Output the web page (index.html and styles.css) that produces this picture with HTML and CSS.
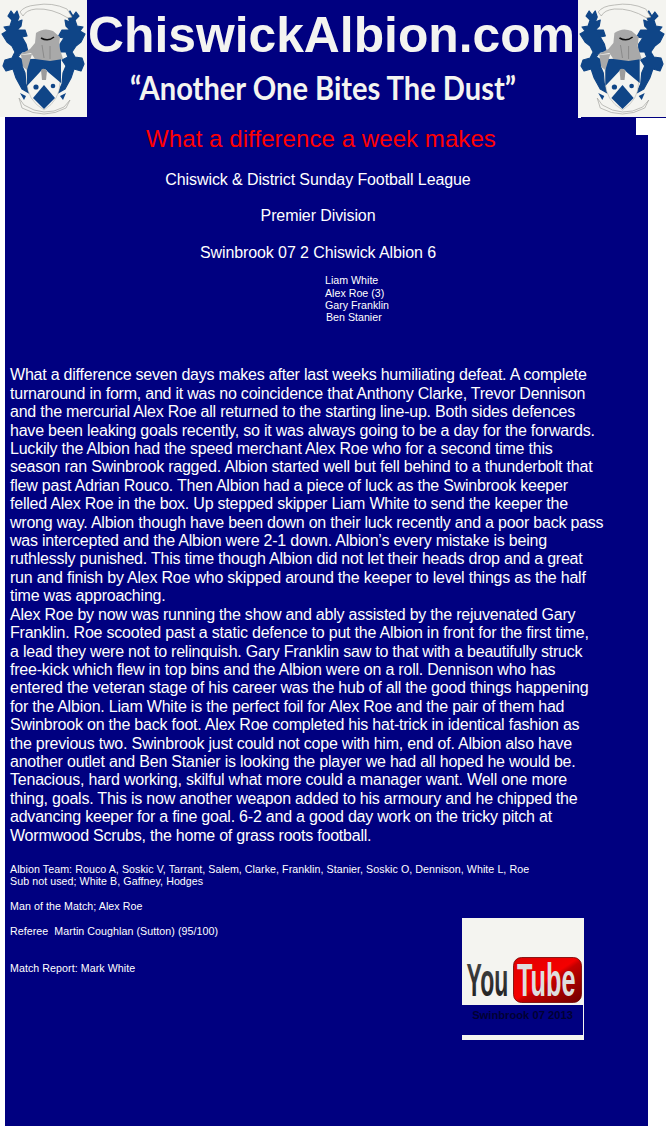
FILE: index.html
```html
<!DOCTYPE html>
<html lang="en">
<head>
<meta charset="utf-8">
<title>ChiswickAlbion.com</title>
<link rel="stylesheet" href="styles.css">
</head>
<body>
<header class="masthead">
  <svg class="crest" viewBox="0 0 87 117" preserveAspectRatio="none" aria-hidden="true">
    <symbol id="crest-art" viewBox="0 0 87 117" preserveAspectRatio="none">
      <rect width="87" height="117" fill="#f4f4f0"/>
      <g fill="#0f4587" stroke="#0f4587" stroke-width="1.2" stroke-linejoin="round">
        <path d="M11,11 L14,15 L17,11 L19,17 L17,22 L22,20 L21,26 L17,30 L25,30 L27,36 L22,37 L26,44 L28,52 L22,52 L18,57 L26,62 L22,66 L25,73 L26,84 L29,93 L22,89 L16,78 L13,69 L6,71 L3,66 L5,60 L12,58 L15,52 L12,46 L7,42 L2,34 L7,31 L4,27 L10,26 L12,20 L8,16 Z"/>
        <path d="M76,12 L73,16 L70,11 L68,17 L70,22 L65,20 L66,26 L70,30 L62,30 L58,37 L64,38 L60,44 L60,52 L66,52 L68,57 L62,60 L66,66 L63,73 L62,84 L58,93 L65,89 L71,78 L74,69 L81,71 L84,64 L82,58 L75,57 L72,52 L76,46 L81,42 L85,34 L80,31 L83,27 L77,26 L75,20 L79,16 Z"/>
      </g>
      <path d="M27,60 L43,57 L60,60 L60,82 Q60,100 44,110 Q27,100 27,82 Z" fill="#f4f4f0" stroke="#a9a9a5" stroke-width=".5"/>
      <path d="M27,59 L61,59 L61,83 L48,72 Q44,66 40,72 L27,86 Z" fill="#0f4587"/>
      <path d="M44,85 L55,98 L44,109 L33,98 Z" fill="#0f4587"/>
      <circle cx="36" cy="87" r="2.6" fill="#0f4587"/>
      <circle cx="53" cy="86" r="2.3" fill="#0f4587"/>
      <path d="M41,70 Q44,67 47,71 L46,80 L42,80 Z" fill="#9c9c9c"/>
      <path d="M36,33 Q44,27 53,31 L60,37 L59,46 L63,59 L50,61 L35,59 L31,53 L19,55 L30,49 L35,43 Z" fill="#a9a9a9"/>
      <path d="M21,55 L32,54 L27,70 L23,67 Z" fill="#a9a9a9"/>
      <path d="M41,38 Q48,42 54,37" fill="none" stroke="#111" stroke-width="1.6"/>
      <path d="M42,45 L44,58 M50,46 L50,59" stroke="#8a8a8a" stroke-width="1" fill="none"/>
      <path d="M20,12 Q24,6 36,5 Q52,2 67,9 L72,17 L68,18 Q52,8 36,9 Q26,10 23,16 Z" fill="#f4f4f0" stroke="#a5a5a1" stroke-width=".7"/>
      <path d="M19,98 L24,105 Q44,118 64,107 L70,100 L66,108 Q44,120 22,108 Z" fill="#f4f4f0" stroke="#a5a5a1" stroke-width=".7"/>
      <path d="M20,93 L26,96 L24,100 Z M66,93 L60,96 L63,100 Z" fill="#0f4587"/>
    </symbol>
    <use href="#crest-art" width="87" height="117"/>
  </svg>
  <div class="brand">
    <div class="brand-name">ChiswickAlbion.com</div>
    <div class="brand-tag"><span class="brand-tag-text">“Another One Bites The Dust”</span></div>
  </div>
  <svg class="crest crest-right" viewBox="0 0 87 117" preserveAspectRatio="none" aria-hidden="true"><use href="#crest-art" width="87" height="117"/></svg>
</header>
<main class="report">
  <div class="notch"></div>
  <h1 class="headline">What a difference a week makes</h1>
  <p class="fixture">Chiswick &amp; District Sunday Football League</p>
  <p class="fixture">Premier Division</p>
  <p class="fixture">Swinbrook 07 2 Chiswick Albion 6</p>
  <p class="scorers">Liam White<br>Alex Roe (3)<br>Gary Franklin<br><span class="nudge">Ben Stanier</span></p>
  <p class="story">What a difference seven days makes after last weeks humiliating defeat. A complete<br>
turnaround in form, and it was no coincidence that Anthony Clarke, Trevor Dennison<br>
and the mercurial Alex Roe all returned to the starting line-up. Both sides defences<br>
have been leaking goals recently, so it was always going to be a day for the forwards.<br>
Luckily the Albion had the speed merchant Alex Roe who for a second time this<br>
season ran Swinbrook ragged. Albion started well but fell behind to a thunderbolt that<br>
flew past Adrian Rouco. Then Albion had a piece of luck as the Swinbrook keeper<br>
felled Alex Roe in the box. Up stepped skipper Liam White to send the keeper the<br>
wrong way. Albion though have been down on their luck recently and a poor back pass<br>
was intercepted and the Albion were 2-1 down. Albion’s every mistake is being<br>
ruthlessly punished. This time though Albion did not let their heads drop and a great<br>
run and finish by Alex Roe who skipped around the keeper to level things as the half<br>
time was approaching.<br>
Alex Roe by now was running the show and ably assisted by the rejuvenated Gary<br>
Franklin. Roe scooted past a static defence to put the Albion in front for the first time,<br>
a lead they were not to relinquish. Gary Franklin saw to that with a beautifully struck<br>
free-kick which flew in top bins and the Albion were on a roll. Dennison who has<br>
entered the veteran stage of his career was the hub of all the good things happening<br>
for the Albion. Liam White is the perfect foil for Alex Roe and the pair of them had<br>
Swinbrook on the back foot. Alex Roe completed his hat-trick in identical fashion as<br>
the previous two. Swinbrook just could not cope with him, end of. Albion also have<br>
another outlet and Ben Stanier is looking the player we had all hoped he would be.<br>
Tenacious, hard working, skilful what more could a manager want. Well one more<br>
thing, goals. This is now another weapon added to his armoury and he chipped the<br>
advancing keeper for a fine goal. 6-2 and a good day work on the tricky pitch at<br>
Wormwood Scrubs, the home of grass roots football.</p>
  <div class="closing">
    <p class="credits">Albion Team: Rouco A, Soskic V, Tarrant, Salem, Clarke, Franklin, Stanier, Soskic O, Dennison, White L, Roe<br>
Sub not used; White B, Gaffney, Hodges<br>
<br>
Man of the Match; Alex Roe<br>
<br>
Referee&nbsp; Martin Coughlan (Sutton) (95/100)<br>
<br>
<br>
Match Report: Mark White</p>
    <a class="video" href="#">
      <span class="video-thumb">
        <svg class="yt" viewBox="0 0 122 87" aria-hidden="true">
          <defs>
            <linearGradient id="yt-red" x1="0" y1="0" x2="1" y2="1">
              <stop offset="0" stop-color="#e00000"/>
              <stop offset=".48" stop-color="#f40000"/>
              <stop offset=".54" stop-color="#c40000"/>
              <stop offset="1" stop-color="#6e0000"/>
            </linearGradient>
            <linearGradient id="yt-dark" x1="0" y1="0" x2="0" y2="1">
              <stop offset="0" stop-color="#4a4a4a"/>
              <stop offset="1" stop-color="#1c1c1c"/>
            </linearGradient>
          </defs>
          <text class="yt-you" transform="translate(4.500 78) scale(.5 1)">You</text>
          <rect x="51.500" y="39.500" width="68" height="45" rx="8" fill="url(#yt-red)" stroke="#6e0000" stroke-width=".8"/>
          <text class="yt-tube" transform="translate(55 78) scale(.55 1)">Tube</text>
        </svg>
      </span>
      <span class="video-label">Swinbrook 07 2013</span>
    </a>
  </div>
</main>
</body>
</html>
```
FILE: styles.css
```css
html, body {
  margin: 0;
  padding: 0;
  background: #fff;
}
body {
  height: 100vh;
  display: flex;
  flex-direction: column;
  overflow: hidden;
  font-family: "Liberation Sans", Arial, sans-serif;
  color: #fff;
}
.masthead {
  position: relative;
  flex: none;
  height: 118px;
  display: flex;
  justify-content: space-between;
  background: #000080;
}
.masthead::before,
.masthead::after {
  content: "";
  position: absolute;
  bottom: 0;
  height: 1px;
  background: #fff;
}
.masthead::before {
  left: 0;
  width: 5px;
}
.masthead::after {
  left: 578px;
  width: 3px;
}
.crest {
  flex: none;
  width: 87px;
  height: 117px;
  display: block;
}
.crest-right {
  width: 88px;
}
.brand {
  flex: 1;
  min-width: 0;
  padding-right: 2px;
  text-align: center;
}
.brand-name {
  margin-top: 6px;
  font-weight: 700;
  font-size: 49.8px;
  line-height: 58px;
  color: #f4f4f0;
  white-space: nowrap;
}
.brand-tag {
  margin-top: 6px;
  padding-right: 17px;
  font-family: Lato, sans-serif;
  font-weight: 700;
  font-size: 32px;
  line-height: 36px;
  color: #f4f4f0;
  white-space: nowrap;
}
.brand-tag-text {
  display: inline-block;
  transform: scaleX(0.91);
}
.report {
  position: relative;
  flex: 1;
  width: 638px;
  margin-left: 5px;
  padding: 7px 0 0 5px;
  background: #000080;
}
.notch {
  position: absolute;
  top: 0;
  right: 0;
  width: 12px;
  height: 17px;
  background: #fff;
}
.headline {
  margin: 0 0 19px;
  padding-right: 16px;
  font-size: 24px;
  font-weight: 400;
  line-height: 27px;
  letter-spacing: 0.07px;
  text-align: center;
  color: #f00;
}
.fixture {
  margin: 18px 0 0;
  padding-right: 22px;
  font-size: 16px;
  line-height: 18.4px;
  letter-spacing: -0.1px;
  text-align: center;
}
.scorers {
  margin: 12px 0 0 315px;
  font-size: 10.67px;
  line-height: 12.3px;
}
.nudge {
  margin-left: 1px;
}
.story {
  margin: 43px 0 0;
  font-size: 16px;
  line-height: 18.4px;
  letter-spacing: -0.22px;
  white-space: nowrap;
}
.closing {
  display: flex;
  margin-top: 18px;
}
.credits {
  flex: none;
  width: 452px;
  margin: 0;
  font-size: 10.67px;
  line-height: 12.4px;
  letter-spacing: 0.06px;
  white-space: nowrap;
}
.video {
  flex: none;
  width: 122px;
  height: 122px;
  margin-top: 55px;
  display: flex;
  flex-direction: column;
  background: #f4f4f0;
  text-decoration: none;
}
.video-thumb {
  display: block;
  height: 87px;
}
.yt {
  display: block;
  width: 122px;
  height: 87px;
}
.yt-you {
  font-family: "Liberation Sans", sans-serif;
  font-weight: 700;
  font-size: 46px;
  fill: url(#yt-dark);
}
.yt-tube {
  font-family: "Liberation Sans", sans-serif;
  font-weight: 700;
  font-size: 46px;
  fill: #dedede;
}
.video-label {
  display: block;
  width: 121px;
  height: 30px;
  background: #000080;
  font-size: 11.2px;
  font-weight: 700;
  line-height: 21px;
  text-align: center;
  color: #000033;
}
```
